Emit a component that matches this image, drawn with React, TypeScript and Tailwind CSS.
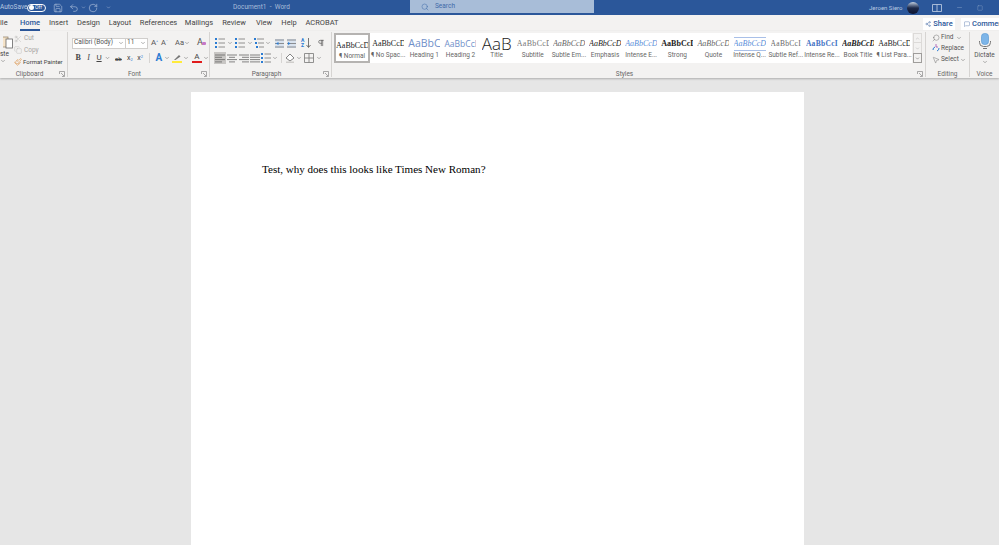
import React from 'react';
import { ChevronDown, Search, Save, Undo2, RotateCw, Scissors, Copy, Paintbrush, Share2, MessageSquare, Minus, Square, MousePointer2, Pilcrow, ChevronUp } from 'lucide-react';

const tabs = [
  { label: 'ile', w: 'w-[16px]' },
  { label: 'Home', w: 'w-[28px]' },
  { label: 'Insert', w: 'w-[29px]' },
  { label: 'Design', w: 'w-[31px]' },
  { label: 'Layout', w: 'w-[32px]' },
  { label: 'References', w: 'w-[45px]' },
  { label: 'Mailings', w: 'w-[36px]' },
  { label: 'Review', w: 'w-[34px]' },
  { label: 'View', w: 'w-[26px]' },
  { label: 'Help', w: 'w-[24px]' },
  { label: 'ACROBAT', w: 'w-[42px]' },
];

const styles = [
  { name: '¶ Normal', cls: 'font-["Liberation_Serif"] text-[8px] text-[#222]' },
  { name: '¶ No Spac...', cls: 'font-["Liberation_Serif"] text-[8px] text-[#222]' },
  { name: 'Heading 1', cls: 'font-["Open_Sans"] text-[10.5px] text-[#6f8fc9]' },
  { name: 'Heading 2', cls: 'font-["Open_Sans"] text-[8.5px] text-[#6f8fc9]' },
  { name: 'Title', cls: 'font-["Open_Sans"] font-light text-[17px] text-[#222] leading-[14px]', text: 'AaB' },
  { name: 'Subtitle', cls: 'font-["Liberation_Serif"] text-[8px] text-[#777] tracking-[0.3px]' },
  { name: 'Subtle Em...', cls: 'font-["Liberation_Serif"] italic text-[8px] text-[#666]' },
  { name: 'Emphasis', cls: 'font-["Liberation_Serif"] italic text-[8px] text-[#222]' },
  { name: 'Intense E...', cls: 'font-["Liberation_Serif"] italic text-[8px] text-[#5b8fd9]' },
  { name: 'Strong', cls: 'font-["Liberation_Serif"] font-bold text-[8px] text-[#222]' },
  { name: 'Quote', cls: 'font-["Liberation_Serif"] italic text-[8px] text-[#666]' },
  { name: 'Intense Q...', cls: 'font-["Liberation_Serif"] italic text-[8px] text-[#5b8fd9] border-y border-[#a9c0e8]' },
  { name: 'Subtle Ref...', cls: 'font-["Liberation_Serif"] text-[7.5px] text-[#666] tracking-[0.3px]', text: 'AaBbCcI' },
  { name: 'Intense Re...', cls: 'font-["Liberation_Serif"] font-bold text-[7.5px] text-[#4472c4] tracking-[0.3px]', text: 'AaBbCcI' },
  { name: 'Book Title', cls: 'font-["Liberation_Serif"] font-bold italic text-[8px] text-[#222]' },
  { name: '¶ List Para...', cls: 'font-["Liberation_Serif"] text-[8px] text-[#222]' },
];

const Chev = ({ className = '' }: { className?: string }) => (
  <ChevronDown size={6} strokeWidth={2} className={`text-[#666] shrink-0 ${className}`} />
);

const Launcher = () => (
  <svg width="6" height="6" viewBox="0 0 6 6" className="shrink-0">
    <path d="M0.5 3V.5H5.5V5.5H3M2 2L5 5" fill="none" stroke="#888" strokeWidth="0.7" />
  </svg>
);

// horizontal lines used by the alignment buttons
const Lines = ({ kind }: { kind: 'left' | 'center' | 'right' | 'justify' }) => {
  const rows = kind === 'justify'
    ? [[0, 10], [0, 10], [0, 10], [0, 10]]
    : kind === 'left'
      ? [[0, 10], [0, 7], [0, 10], [0, 7]]
      : kind === 'center'
        ? [[0, 10], [2, 8], [0, 10], [2, 8]]
        : [[0, 10], [3, 10], [0, 10], [3, 10]];
  return (
    <svg width="10" height="9" viewBox="0 0 10 9">
      {rows.map((r, i) => (
        <line key={i} x1={r[0]} x2={r[1]} y1={1 + i * 2.3} y2={1 + i * 2.3} stroke="#666" strokeWidth="0.8" />
      ))}
    </svg>
  );
};

const ListIcon = ({ indent = false }: { indent?: boolean }) => (
  <svg width="10" height="10" viewBox="0 0 10 10">
    {[1, 5, 9].map((y, i) => (
      <g key={y}>
        <rect x={indent ? i * 1 : 0} y={y - 1} width="2" height="2" fill="#2b7cd3" />
        <line x1={indent ? 3 + i : 3.5} x2="10" y1={y} y2={y} stroke="#777" strokeWidth="0.8" />
      </g>
    ))}
  </svg>
);

const IndentIcon = ({ flip = false }: { flip?: boolean }) => (
  <svg width="9" height="9" viewBox="0 0 9 9">
    <rect x="0" y="0" width="9" height="9" fill="#d8e2ee" />
    {[1, 4.5, 8].map((y) => (
      <line key={y} x1="0" x2="9" y1={y} y2={y} stroke="#777" strokeWidth="0.8" />
    ))}
    <path d={flip ? 'M1 3L3.5 4.5L1 6Z' : 'M3.5 3L1 4.5L3.5 6Z'} fill="#2b7cd3" />
  </svg>
);

const GroupLabel = ({ label, launcher = true }: { label: string; launcher?: boolean }) => (
  <div className="mt-auto h-[6px] flex items-center">
    <span className="flex-1 text-center text-[6.5px] text-[#666] leading-none whitespace-nowrap">{label}</span>
    {launcher && <span className="mr-[2px]"><Launcher /></span>}
  </div>
);

export default function App() {
  return (
    <div className='w-[999px] h-[545px] overflow-hidden bg-[#e6e6e6] flex flex-col font-["Roboto",sans-serif]'>
      {/* Title bar */}
      <div className="h-[15px] bg-[#2b579a] flex items-center text-[#b9c9e0] text-[6.5px] shrink-0">
        <span className="w-[27px] whitespace-nowrap overflow-hidden shrink-0">AutoSave</span>
        <span className="w-[19px] h-[8px] rounded-full border border-white flex items-center pl-[1px] gap-[1px] shrink-0">
          <span className="w-[5px] h-[5px] rounded-full bg-white" />
          <span className="text-[5px] leading-none text-white">Off</span>
        </span>
        <Save size={10} strokeWidth={1.3} className="ml-[7px] text-[#c5d2e6]" />
        <Undo2 size={10} strokeWidth={1.3} className="ml-[6px] text-[#c5d2e6]" />
        <ChevronDown size={5} className="ml-[2px] text-[#c5d2e6]" />
        <RotateCw size={10} strokeWidth={1.3} className="ml-[2px] text-[#c5d2e6]" />
        <ChevronDown size={5} className="ml-[8px] text-[#c5d2e6]" />
        <span className="ml-[122px] w-[177px] whitespace-pre text-[#a9bdd9]">Document1  -  Word</span>
        <div className="w-[184px] h-[13px] -mt-[2px] bg-[#a8bdd8] flex items-center pl-[11px] gap-[6px] text-[#3f6aa8]">
          <Search size={8} strokeWidth={1.5} className="text-[#3f6aa8]" />
          <span className="text-[6.5px]">Search</span>
        </div>
        <span className="ml-[275px] w-[38px] whitespace-nowrap text-[#b9c9e0] text-[6px]">Jeroen Siero</span>
        <span className="w-[12px] h-[12px] rounded-full bg-gradient-to-b from-[#c8d4e4] via-[#1d2a4a] to-[#0d1430] shrink-0" />
        <svg width="10" height="8" viewBox="0 0 10 8" className="ml-[13px] shrink-0">
          <path d="M.5.5H9.5V7.5H.5ZM5 .5V7.5" fill="none" stroke="#c5d2e6" strokeWidth="0.8" />
        </svg>
        <Minus size={7} strokeWidth={1} className="ml-[14px] text-[#c5d2e6]" />
        <Square size={6} strokeWidth={1} className="ml-[14px] text-[#c5d2e6]" />
      </div>

      {/* Tabs */}
      <div className="h-[16px] bg-[#f3f2f1] flex items-center text-[7.5px] text-[#444] shrink-0">
        <div className="flex items-stretch h-full">
          {tabs.map((t, i) => (
            <span key={t.label} className={`${t.w} flex items-center whitespace-nowrap ${i === 0 ? 'justify-start' : 'justify-center'}`}>
              <span className={i === 1 ? 'font-medium text-[#2b579a] border-b-2 border-[#2b579a] pb-[1px] mt-[2px] leading-[11px]' : ''}>{t.label}</span>
            </span>
          ))}
        </div>
        <div className="ml-auto flex items-center h-[12px] mt-[2px]">
          <span className="w-[32px] h-[12px] bg-white flex items-center justify-center gap-[2px] text-[#2b579a] font-medium">
            <Share2 size={6} strokeWidth={1.4} />
            Share
          </span>
          <span className="ml-[6px] w-[38px] h-[12px] bg-white flex items-center pl-[3px] gap-[2px] text-[#2b579a] font-medium overflow-hidden whitespace-nowrap">
            <MessageSquare size={6} strokeWidth={1.4} className="shrink-0" />
            Comments
          </span>
        </div>
      </div>

      {/* Ribbon */}
      <div className="h-[47px] bg-[#f3f2f1] flex shrink-0 shadow-[0_1px_2px_rgba(0,0,0,0.25)] text-[#444]">
        {/* Clipboard */}
        <div className="w-[68px] flex flex-col border-r border-[#d6d4d2] my-[1px] shrink-0">
          <div className="flex pt-[1px]">
            <div className="w-[13px] flex flex-col items-end shrink-0">
              <svg width="10" height="14" viewBox="0 0 10 14" className="mt-[2px]">
                <rect x="-4" y="2" width="9" height="10" fill="#f5e3c8" stroke="#8a7a60" strokeWidth="0.7" />
                <rect x="3" y="4" width="6.5" height="9" fill="#fff" stroke="#666" strokeWidth="0.8" />
              </svg>
              <span className="text-[6.5px] leading-[8px] self-start mt-[1px]">ste</span>
              <Chev className="self-start" />
            </div>
            <div className="ml-[1px] flex flex-col text-[6.5px] leading-[11.5px]">
              <span className="flex items-center gap-[2px] text-[#a8a6a4]"><Scissors size={8} strokeWidth={1} />Cut</span>
              <span className="flex items-center gap-[2px] text-[#a8a6a4]"><Copy size={8} strokeWidth={1} />Copy</span>
              <span className="flex items-center gap-[1px] text-[6px] text-[#444] whitespace-nowrap"><Paintbrush size={8} strokeWidth={1.4} className="text-[#d9822b]" />Format Painter</span>
            </div>
          </div>
          <GroupLabel label="Clipboard" />
        </div>

        {/* Font */}
        <div className="w-[142px] flex flex-col border-r border-[#d6d4d2] my-[1px] shrink-0">
          <div className="flex items-center h-[12px] mt-[5px] pl-[4px]">
            <div className="w-[54px] h-[11px] bg-white border border-[#d0cecc] flex items-center justify-between px-[1px] text-[6.5px] text-[#555]">
              Calibri (Body)<Chev />
            </div>
            <div className="w-[22px] h-[11px] bg-white border border-l-0 border-[#d0cecc] flex items-center justify-between px-[1px] text-[6.5px] text-[#555]">
              11<Chev />
            </div>
            <span className="ml-[3px] w-[10px] text-[8px] text-[#555]">A<sup className="text-[4px] text-[#2b7cd3]">^</sup></span>
            <span className="w-[12px] text-[7.5px] text-[#555]">A<sup className="text-[4px] text-[#2b7cd3]">ˇ</sup></span>
            <span className="ml-[2px] w-[16px] flex items-center text-[7.5px] text-[#555]">Aa<Chev /></span>
            <span className="ml-[6px] w-[10px] text-[9px] text-[#555] relative">
              A
              <span className="absolute left-[5px] top-[6px] w-[4px] h-[3px] bg-[#c678c8] rounded-[1px]" />
            </span>
          </div>
          <div className="flex items-center h-[12px] mt-[3px] pl-[5px] text-[8px] text-[#444]">
            <span className="w-[11px] text-center font-bold font-['Liberation_Serif']">B</span>
            <span className="w-[11px] text-center italic font-['Liberation_Serif']">I</span>
            <span className="w-[11px] text-center underline">U</span>
            <Chev className="w-[7px]" />
            <span className="ml-[1px] w-[13px] text-center text-[6px] line-through">ab</span>
            <span className="w-[11px] text-center text-[7px]">x<sub className="text-[4px] text-[#2b7cd3]">2</sub></span>
            <span className="w-[11px] text-center text-[7px]">x<sup className="text-[4px] text-[#2b7cd3]">2</sup></span>
            <span className="ml-[4px] w-px h-[10px] bg-[#d6d4d2]" />
            <span className="ml-[5px] w-[8px] text-[10px] font-bold text-[#2b7cd3] leading-none">A</span>
            <Chev className="ml-[1px]" />
            <span className="ml-[2px] w-[10px] flex flex-col items-center">
              <svg width="8" height="7" viewBox="0 0 8 7"><path d="M1 6L6 1L7.5 2.5L2.5 6Z" fill="#777" /></svg>
              <span className="w-[10px] h-[2px] bg-[#ffeb3b]" />
            </span>
            <Chev className="ml-[1px]" />
            <span className="ml-[3px] w-[10px] flex flex-col items-center text-[8px] leading-[8px] text-[#444]">
              A
              <span className="w-[10px] h-[2px] bg-[#e01b1b]" />
            </span>
            <Chev className="ml-[1px]" />
          </div>
          <GroupLabel label="Font" />
        </div>

        {/* Paragraph */}
        <div className="w-[122px] flex flex-col border-r border-[#d6d4d2] my-[1px] shrink-0">
          <div className="flex items-center h-[12px] mt-[5px] pl-[5px]">
            <ListIcon />
            <Chev className="ml-[2px]" />
            <span className="ml-[2px]"><ListIcon /></span>
            <Chev className="ml-[2px]" />
            <span className="ml-[1px]"><ListIcon indent /></span>
            <Chev className="ml-[1px]" />
            <span className="ml-[4px]"><IndentIcon /></span>
            <span className="ml-[3px]"><IndentIcon flip /></span>
            <span className="ml-[5px] w-[5px] text-[5px] leading-[5px] text-[#2b7cd3] font-bold">A<br />Z</span>
            <svg width="5" height="10" viewBox="0 0 5 10"><path d="M2.5 0V9M.5 7L2.5 9.5L4.5 7" fill="none" stroke="#555" strokeWidth="0.8" /></svg>
            <Pilcrow size={8} strokeWidth={2} className="ml-[6px] text-[#555]" />
          </div>
          <div className="flex items-center h-[12px] mt-[3px] pl-[4px]">
            <span className="w-[12px] h-[12px] bg-[#c8c6c4] flex items-center justify-center"><Lines kind="left" /></span>
            <span className="w-[11px] flex justify-center"><Lines kind="center" /></span>
            <span className="ml-[1px] w-[11px] flex justify-center"><Lines kind="right" /></span>
            <span className="w-[11px] flex justify-center"><Lines kind="justify" /></span>
            <span className="ml-[1px] w-[10px] flex justify-center"><ListIcon /></span>
            <Chev className="ml-[1px]" />
            <span className="ml-[3px] w-px h-[10px] bg-[#d6d4d2]" />
            <svg width="10" height="10" viewBox="0 0 10 10" className="ml-[3px]">
              <path d="M5 1L9 5L5 8L1 5Z" fill="#fff" stroke="#666" strokeWidth="0.8" />
              <rect x="1" y="8.5" width="8" height="1.5" fill="#cfcdcb" />
            </svg>
            <Chev className="ml-[1px]" />
            <svg width="10" height="10" viewBox="0 0 10 10" className="ml-[2px]">
              <path d="M.5.5H9.5V9.5H.5ZM5 .5V9.5M.5 5H9.5" fill="none" stroke="#777" strokeWidth="0.8" />
            </svg>
            <Chev className="ml-[2px]" />
          </div>
          <GroupLabel label="Paragraph" />
        </div>

        {/* Styles */}
        <div className="w-[594px] flex flex-col border-r border-[#d6d4d2] my-[1px] shrink-0">
          <div className="flex mt-[1px] ml-[2px] h-[30px]">
            <div className="w-[578px] h-[30px] bg-white flex overflow-hidden">
              {styles.map((s, i) => (
                <div
                  key={s.name}
                  className={`w-[36.15px] shrink-0 flex flex-col items-center pt-[4px] ${i === 0 ? 'border-2 border-[#b5b3b1] pt-[2px]' : ''}`}
                >
                  <div className="h-[14px] w-[32px] flex items-center justify-center overflow-hidden">
                    <span className={`whitespace-nowrap overflow-hidden max-w-[32px] ${s.cls}`}>{s.text ?? 'AaBbCcDd'}</span>
                  </div>
                  <span className="text-[6.5px] leading-[9px] text-[#666] whitespace-nowrap">{s.name}</span>
                </div>
              ))}
            </div>
            <div className="w-[9px] ml-[1px] flex flex-col shrink-0">
              <span className="h-[10px] flex items-center justify-center border border-[#dcdad8]"><ChevronUp size={5} className="text-[#aaa]" /></span>
              <span className="h-[10px] flex items-center justify-center border-x border-[#dcdad8]"><ChevronDown size={5} className="text-[#aaa]" /></span>
              <span className="h-[10px] flex items-center justify-center border border-[#9f9d9b]"><ChevronDown size={5} className="text-[#444]" /></span>
            </div>
          </div>
          <GroupLabel label="Styles" />
        </div>

        {/* Editing */}
        <div className="w-[44px] flex flex-col border-r border-[#d6d4d2] my-[1px] shrink-0">
          <div className="flex flex-col pl-[6px] text-[6.5px] leading-[11px] text-[#555]">
            <span className="flex items-center gap-[1px]"><Search size={8} strokeWidth={1.2} className="-scale-x-100" />Find<Chev className="ml-[2px]" /></span>
            <span className="flex items-center gap-[1px]">
              <svg width="8" height="9" viewBox="0 0 8 9" className="shrink-0">
                <path d="M1 6A3 3 0 0 1 3 3M7 4A3 3 0 0 1 5 7" fill="none" stroke="#2b7cd3" strokeWidth="1" />
                <path d="M4 0V3H6" fill="none" stroke="#a04fb0" strokeWidth="0.8" />
              </svg>
              Replace
            </span>
            <span className="flex items-center gap-[1px]"><MousePointer2 size={8} strokeWidth={1.2} />Select<Chev /></span>
          </div>
          <GroupLabel label="Editing" launcher={false} />
        </div>

        {/* Voice */}
        <div className="flex-1 flex flex-col my-[1px]">
          <div className="flex flex-col items-center pt-[1px] text-[6.5px] leading-[8px] text-[#555]">
            <svg width="14" height="16" viewBox="0 0 14 16">
              <rect x="3.5" y="0.5" width="7" height="11" rx="3" fill="#7db5e8" stroke="#5b9bd5" strokeWidth="0.7" />
              <path d="M1.5 8V9.5A4 4 0 0 0 5.5 13.5H8.5A4 4 0 0 0 12.5 9.5V8" fill="none" stroke="#777" strokeWidth="1" />
              <path d="M5 15.5H9" stroke="#777" strokeWidth="1" />
            </svg>
            <span className="mt-[2px]">Dictate</span>
            <Chev />
          </div>
          <GroupLabel label="Voice" launcher={false} />
        </div>
      </div>

      {/* Document area */}
      <div className="flex-1 flex pl-[191px] pt-[14px] overflow-hidden">
        <div className="w-[613px] h-[800px] bg-white pl-[71px] pt-[71px] shrink-0">
          <p className="font-['Liberation_Serif',serif] text-[11.05px] leading-[13px] text-black whitespace-nowrap">
            Test, why does this looks like Times New Roman?
          </p>
        </div>
      </div>
    </div>
  );
}
